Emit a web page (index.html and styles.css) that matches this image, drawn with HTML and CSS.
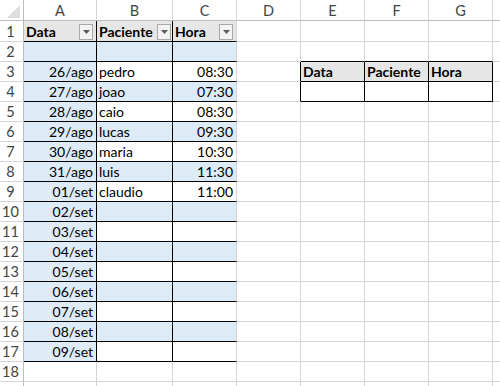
FILE: index.html
```html
<!DOCTYPE html>
<html>
<head>
<meta charset="utf-8">
<link rel="stylesheet" href="styles.css">
</head>
<body>
<div class="sheet">
  <div class="corner"><svg class="tri" width="24" height="20" viewBox="0 0 24 20"><polygon points="20,5 20,18 7,18" fill="#dedede"/></svg></div>
  <div class="ch">A</div><div class="ch">B</div><div class="ch">C</div><div class="ch">D</div><div class="ch">E</div><div class="ch">F</div><div class="ch">G</div><div class="ch last"></div>

  <div class="rh">1</div>
  <div class="cell hd t vb fh"><span>Data</span><span class="fb"><svg width="7" height="4" viewBox="0 0 7 4"><path d="M0 0H7L3.5 4Z" fill="#5b5b5b"/></svg></span></div>
  <div class="cell hd t vb fh fhb"><span>Paciente</span><span class="fb"><svg width="7" height="4" viewBox="0 0 7 4"><path d="M0 0H7L3.5 4Z" fill="#5b5b5b"/></svg></span></div>
  <div class="cell hd t fh"><span>Hora</span><span class="fb"><svg width="7" height="4" viewBox="0 0 7 4"><path d="M0 0H7L3.5 4Z" fill="#5b5b5b"/></svg></span></div>
  <div class="cell"></div><div class="cell"></div><div class="cell"></div><div class="cell"></div><div class="cell last"></div>

  <div class="rh">2</div>
  <div class="cell blue t vb"></div><div class="cell blue t vb"></div><div class="cell blue t"></div>
  <div class="cell"></div><div class="cell bb"></div><div class="cell bb"></div><div class="cell bb"></div><div class="cell last"></div>

  <div class="rh">3</div>
  <div class="cell blue t vb r">26/ago</div><div class="cell t vb">pedro</div><div class="cell t r">08:30</div>
  <div class="cell vb"></div><div class="cell hd box">Data</div><div class="cell hd box">Paciente</div><div class="cell hd box">Hora</div><div class="cell last"></div>

  <div class="rh">4</div>
  <div class="cell blue t vb r">27/ago</div><div class="cell blue t vb">joao</div><div class="cell blue t r">07:30</div>
  <div class="cell vb"></div><div class="cell box"></div><div class="cell box"></div><div class="cell box"></div><div class="cell last"></div>

  <div class="rh">5</div>
  <div class="cell blue t vb r">28/ago</div><div class="cell t vb">caio</div><div class="cell t r">08:30</div>
  <div class="cell"></div><div class="cell"></div><div class="cell"></div><div class="cell"></div><div class="cell last"></div>

  <div class="rh">6</div>
  <div class="cell blue t vb r">29/ago</div><div class="cell blue t vb">lucas</div><div class="cell blue t r">09:30</div>
  <div class="cell"></div><div class="cell"></div><div class="cell"></div><div class="cell"></div><div class="cell last"></div>

  <div class="rh">7</div>
  <div class="cell blue t vb r">30/ago</div><div class="cell t vb">maria</div><div class="cell t r">10:30</div>
  <div class="cell"></div><div class="cell"></div><div class="cell"></div><div class="cell"></div><div class="cell last"></div>

  <div class="rh">8</div>
  <div class="cell blue t vb r">31/ago</div><div class="cell blue t vb">luis</div><div class="cell blue t r">11:30</div>
  <div class="cell"></div><div class="cell"></div><div class="cell"></div><div class="cell"></div><div class="cell last"></div>

  <div class="rh">9</div>
  <div class="cell blue t vb r">01/set</div><div class="cell t vb">claudio</div><div class="cell t r">11:00</div>
  <div class="cell"></div><div class="cell"></div><div class="cell"></div><div class="cell"></div><div class="cell last"></div>

  <div class="rh">10</div>
  <div class="cell blue t vb r">02/set</div><div class="cell blue t vb"></div><div class="cell blue t"></div>
  <div class="cell"></div><div class="cell"></div><div class="cell"></div><div class="cell"></div><div class="cell last"></div>

  <div class="rh">11</div>
  <div class="cell blue t vb r">03/set</div><div class="cell t vb"></div><div class="cell t"></div>
  <div class="cell"></div><div class="cell"></div><div class="cell"></div><div class="cell"></div><div class="cell last"></div>

  <div class="rh">12</div>
  <div class="cell blue t vb r">04/set</div><div class="cell blue t vb"></div><div class="cell blue t"></div>
  <div class="cell"></div><div class="cell"></div><div class="cell"></div><div class="cell"></div><div class="cell last"></div>

  <div class="rh">13</div>
  <div class="cell blue t vb r">05/set</div><div class="cell t vb"></div><div class="cell t"></div>
  <div class="cell"></div><div class="cell"></div><div class="cell"></div><div class="cell"></div><div class="cell last"></div>

  <div class="rh">14</div>
  <div class="cell blue t vb r">06/set</div><div class="cell blue t vb"></div><div class="cell blue t"></div>
  <div class="cell"></div><div class="cell"></div><div class="cell"></div><div class="cell"></div><div class="cell last"></div>

  <div class="rh">15</div>
  <div class="cell blue t vb r">07/set</div><div class="cell t vb"></div><div class="cell t"></div>
  <div class="cell"></div><div class="cell"></div><div class="cell"></div><div class="cell"></div><div class="cell last"></div>

  <div class="rh">16</div>
  <div class="cell blue t vb r">08/set</div><div class="cell blue t vb"></div><div class="cell blue t"></div>
  <div class="cell"></div><div class="cell"></div><div class="cell"></div><div class="cell"></div><div class="cell last"></div>

  <div class="rh">17</div>
  <div class="cell blue t vb r">09/set</div><div class="cell t vb"></div><div class="cell t"></div>
  <div class="cell"></div><div class="cell"></div><div class="cell"></div><div class="cell"></div><div class="cell last"></div>

  <div class="rh">18</div>
  <div class="cell"></div><div class="cell"></div><div class="cell"></div>
  <div class="cell"></div><div class="cell"></div><div class="cell"></div><div class="cell"></div><div class="cell last"></div>

  <div class="rh"></div>
  <div class="cell"></div><div class="cell"></div><div class="cell"></div>
  <div class="cell"></div><div class="cell"></div><div class="cell"></div><div class="cell"></div><div class="cell last"></div>
</div>
</body>
</html>
```

FILE: styles.css
```css
html, body {
  margin: 0;
  padding: 0;
  background: #ffffff;
  overflow: hidden;
}

body {
  font-family: Lato, "Liberation Sans", sans-serif;
  font-size: 14px;
  color: #000000;
}

.sheet {
  display: grid;
  grid-template-columns: 24px 73px 76px 64px 64px 64px 64px 64px 1fr;
  grid-template-rows: 21px 21px repeat(18, 20px) 4px;
  width: 500px;
  height: 386px;
  overflow: hidden;
}

.corner {
  box-sizing: border-box;
  border-right: 1px solid #bcbcbc;
  border-bottom: 1px solid #bcbcbc;
  background: #ffffff;
}

.tri {
  display: block;
}

.ch {
  box-sizing: border-box;
  border-right: 1px solid #d4d4d4;
  border-bottom: 1px solid #bcbcbc;
  display: flex;
  align-items: center;
  justify-content: center;
  color: #444444;
  font-size: 14.5px;
  padding-top: 1px;
}

.rh {
  box-sizing: border-box;
  border-right: 1px solid #bcbcbc;
  border-bottom: 1px solid #d4d4d4;
  display: flex;
  align-items: flex-end;
  justify-content: center;
  color: #444444;
  font-size: 14.5px;
  line-height: 19px;
  padding-right: 2px;
}

.cell {
  box-sizing: border-box;
  border-right: 1px solid #d4d4d4;
  border-bottom: 1px solid #d4d4d4;
  padding: 0 2px;
  line-height: 19px;
  white-space: nowrap;
  overflow: hidden;
  display: flex;
  align-items: flex-end;
}

.last {
  border-right: none;
}

.blue {
  background: #ddebf7;
}

.hd {
  background: #e7e6e6;
  font-weight: bold;
}

.t {
  border-bottom-color: #000000;
}

.vb {
  border-right-color: #000000;
}

.bb {
  border-bottom-color: #000000;
}

.box {
  border-right-color: #000000;
  border-bottom-color: #000000;
}

.r {
  justify-content: flex-end;
  padding-right: 3px;
}

.fh {
  justify-content: space-between;
  align-items: center;
  padding-right: 3px;
}

.fhb {
  padding-right: 1px;
}

.fh span:first-child {
  align-self: flex-end;
}

.fb {
  box-sizing: border-box;
  width: 14px;
  height: 16px;
  border: 1px solid #a9a9a9;
  background: #f3f3f3;
  display: flex;
  align-items: center;
  justify-content: center;
  margin-top: 1px;
  flex: none;
}

.fb svg {
  display: block;
}
```
